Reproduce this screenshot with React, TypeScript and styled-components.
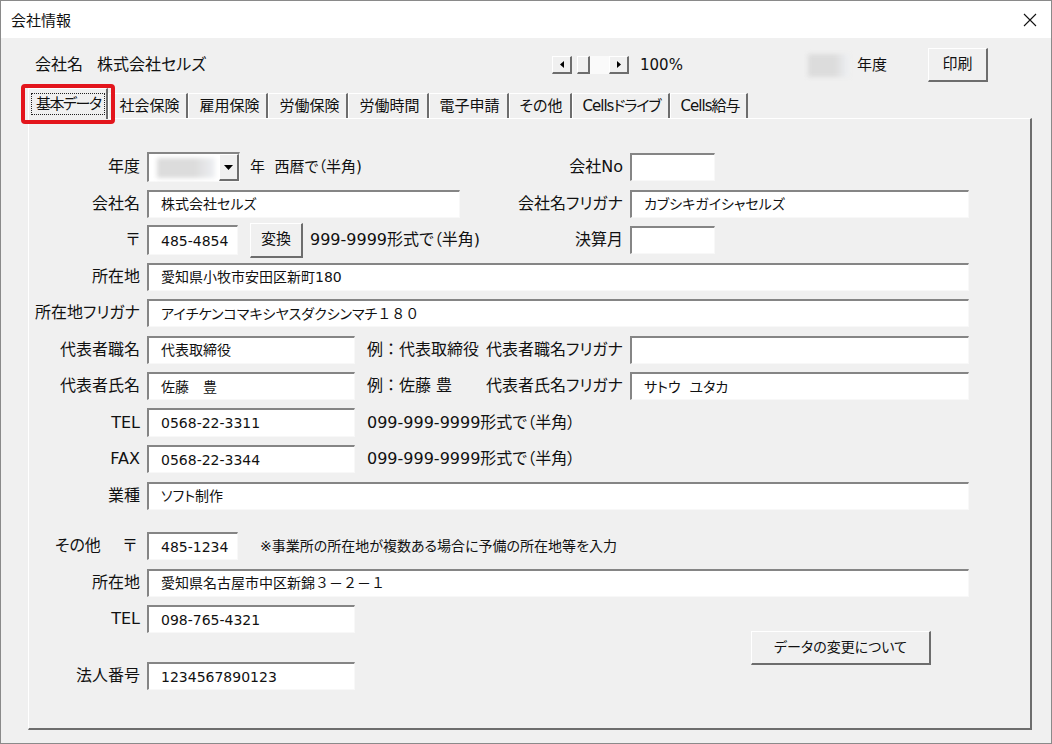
import React from "react";
import styled, { createGlobalStyle } from "styled-components";

const GlobalStyle = createGlobalStyle`
  html, body {
    margin: 0;
    padding: 0;
    background: #ffffff;
  }
  body {
    font-family: "DejaVu Sans", "Noto Sans CJK JP", sans-serif;
    font-feature-settings: "palt";
    color: #111111;
  }
`;

const Window = styled.div`
  width: 1052px;
  height: 744px;
  box-sizing: border-box;
  border: 1px solid #8a8a8a;
  display: flex;
  flex-direction: column;
  background: #f0f0f0;
`;

const TitleBar = styled.div`
  height: 37px;
  flex: none;
  background: #ffffff;
  display: flex;
  align-items: center;
  justify-content: space-between;
  padding: 0 14px 0 10px;
  font-size: 15px;
`;

const Body = styled.div`
  flex: 1;
  min-height: 0;
  display: flex;
  flex-direction: column;
  padding: 10px 19px 13px 27px;
`;

const Header = styled.div`
  height: 34px;
  flex: none;
  display: flex;
  align-items: center;
  padding: 0 44px 0 7px;
  font-size: 16px;
  line-height: 1;
`;

const NameGroup = styled.div`
  width: 517px;
  display: flex;
  gap: 14px;
`;

const ZoomGroup = styled.div`
  width: 256px;
  display: flex;
  align-items: center;
  gap: 11px;
  font-size: 15px;
`;

const ScrollBar = styled.div`
  display: flex;
  height: 18px;
`;

const Raised = styled.div`
  box-sizing: border-box;
  background: #f0f0f0;
  border-top: 1px solid #ffffff;
  border-left: 1px solid #ffffff;
  border-right: 2px solid #6d6d6d;
  border-bottom: 2px solid #6d6d6d;
  display: flex;
  align-items: center;
  justify-content: center;
`;

const ScrollArrow = styled(Raised)`
  width: 20px;
  height: 18px;
`;

const Track = styled.div`
  width: 37px;
  display: flex;
  background: linear-gradient(to right, #f0f0f0 0 5px, #fafafa 5px);
`;

const Thumb = styled(Raised)`
  margin-left: 5px;
  width: 13px;
  height: 18px;
`;

const BlurPatch = styled.div<{ $w: number; $h: number }>`
  width: ${(p) => p.$w}px;
  height: ${(p) => p.$h}px;
  background: linear-gradient(to right, #dcdcdc 65%, #eef0f3);
  filter: blur(2px);
`;

const YearCaption = styled.span`
  margin-left: 8px;
  font-size: 15px;
`;

const PushButton = styled(Raised)<{ $w: number; $h: number }>`
  width: ${(p) => p.$w}px;
  height: ${(p) => p.$h}px;
  font-size: 15px;
  line-height: 1;
`;

const PrintButton = styled(PushButton)`
  margin-left: auto;
`;

const TabStrip = styled.div`
  height: 30px;
  flex: none;
  margin-top: 6px;
  display: flex;
  align-items: flex-end;
  font-size: 15px;
  line-height: 1;
  position: relative;
  z-index: 1;
`;

const Tab = styled.div<{ $tight?: boolean }>`
  height: 25px;
  box-sizing: border-box;
  border-top: 1px solid #ffffff;
  border-left: 1px solid #ffffff;
  border-right: 2px solid #6d6d6d;
  padding: 0 7px 0 10px;
  display: flex;
  align-items: center;
  white-space: nowrap;
  letter-spacing: ${(p) => (p.$tight ? "-1px" : "0")};
`;

const ActiveTab = styled.div`
  position: relative;
  height: 31px;
  margin-bottom: -1px;
  box-sizing: border-box;
  background: #f0f0f0;
  border-top: 1px solid #ffffff;
  border-left: 1px solid #ffffff;
  border-right: 2px solid #6d6d6d;
  padding: 4px 1px 4px 2px;
  display: flex;
`;

const FocusRect = styled.div`
  border: 1px dotted #222222;
  padding: 0 4px;
  display: flex;
  align-items: center;
  white-space: nowrap;
  letter-spacing: -1.5px;
`;

const Highlight = styled.div`
  position: absolute;
  left: -8px;
  right: -9px;
  top: -5px;
  bottom: -5px;
  border: 4px solid #e3151c;
  border-radius: 4px;
  pointer-events: none;
`;

const Panel = styled.div`
  flex: 1;
  min-height: 0;
  box-sizing: border-box;
  border-top: 1px solid #ffffff;
  border-left: 1px solid #ffffff;
  border-right: 2px solid #6d6d6d;
  border-bottom: 2px solid #6d6d6d;
  padding-top: 30px;
`;

const Row = styled.div<{ $gap?: number }>`
  display: grid;
  grid-template-columns: 118px 334px 149px 339px;
  height: 36.5px;
  align-items: center;
  margin-top: ${(p) => p.$gap ?? 0}px;
`;

const Label = styled.div<{ $split?: boolean }>`
  padding: ${(p) => (p.$split ? "0 10px 0 26px" : "0 7px 0 0")};
  display: flex;
  justify-content: ${(p) => (p.$split ? "space-between" : "flex-end")};
  font-size: 16px;
  line-height: 1;
  white-space: nowrap;
`;

const Cell = styled.div<{ $span?: number }>`
  grid-column: span ${(p) => p.$span ?? 1};
  display: flex;
  align-items: center;
  white-space: nowrap;
`;

const TextBox = styled.div<{ $w: number; $h?: number }>`
  width: ${(p) => p.$w}px;
  height: ${(p) => p.$h ?? 28}px;
  box-sizing: border-box;
  flex: none;
  background: #ffffff;
  border-style: solid;
  border-width: 2px 1px 1px 2px;
  border-color: #858585 #f8f8f8 #f8f8f8 #858585;
  padding-left: 12px;
  display: flex;
  align-items: center;
  font-size: 14px;
  line-height: 1;
  white-space: pre;
`;

/* full-width digits keep their em width */
const Wide = styled.span`
  font-feature-settings: normal;
`;

const Combo = styled.div`
  width: 93px;
  height: 30px;
  box-sizing: border-box;
  display: flex;
  background: #ffffff;
  border-style: solid;
  border-width: 2px 1px 1px 2px;
  border-color: #858585 #f8f8f8 #f8f8f8 #858585;
`;

const ComboField = styled.div`
  flex: 1;
  display: flex;
  align-items: center;
  padding-left: 8px;
`;

const DropButton = styled(Raised)`
  width: 20px;
  height: 100%;
`;

const Hint = styled.span<{ $ml: number; $size?: number; $full?: boolean }>`
  margin-left: ${(p) => p.$ml}px;
  font-size: ${(p) => p.$size ?? 16}px;
  line-height: 1;
  font-feature-settings: ${(p) => (p.$full ? "normal" : "\"palt\"")};
`;

const Tail = styled.div`
  display: flex;
  align-items: center;
`;

const Stack = styled.div`
  width: 452px;
  display: flex;
  flex-direction: column;
`;

const AboutButton = styled(PushButton)`
  margin-left: 270px;
  font-size: 14px;
`;

const tabs = [
  "社会保険",
  "雇用保険",
  "労働保険",
  "労働時間",
  "電子申請",
  "その他",
  "Cellsドライブ",
  "Cells給与",
];

function CloseIcon() {
  return (
    <svg width="14" height="14" viewBox="0 0 14 14">
      <path d="M1 1 L13 13 M13 1 L1 13" stroke="#111" strokeWidth="1.1" fill="none" />
    </svg>
  );
}

function Arrow({ dir }: { dir: "left" | "right" | "down" }) {
  if (dir === "down") {
    return (
      <svg width="9" height="5" viewBox="0 0 9 5">
        <polygon points="0,0 9,0 4.5,5" fill="#000" />
      </svg>
    );
  }
  return (
    <svg width="4" height="7" viewBox="0 0 4 7">
      <polygon points={dir === "left" ? "4,0 4,7 0,3.5" : "0,0 0,7 4,3.5"} fill="#000" />
    </svg>
  );
}

export default function App() {
  return (
    <>
      <GlobalStyle />
      <Window>
        <TitleBar>
          <span>会社情報</span>
          <CloseIcon />
        </TitleBar>
        <Body>
          <Header>
            <NameGroup>
              <span>会社名</span>
              <span>株式会社セルズ</span>
            </NameGroup>
            <ZoomGroup>
              <ScrollBar>
                <ScrollArrow>
                  <Arrow dir="left" />
                </ScrollArrow>
                <Track>
                  <Thumb />
                </Track>
                <ScrollArrow>
                  <Arrow dir="right" />
                </ScrollArrow>
              </ScrollBar>
              <span>100%</span>
            </ZoomGroup>
            <BlurPatch $w={41} $h={23} />
            <YearCaption>年度</YearCaption>
            <PrintButton $w={60} $h={34}>
              印刷
            </PrintButton>
          </Header>

          <TabStrip>
            <ActiveTab>
              <FocusRect>基本データ</FocusRect>
              <Highlight />
            </ActiveTab>
            {tabs.map((t) => (
              <Tab key={t} $tight={t.startsWith("Cells")}>
                {t}
              </Tab>
            ))}
          </TabStrip>

          <Panel>
            <Row>
              <Label>年度</Label>
              <Cell>
                <Combo>
                  <ComboField>
                    <BlurPatch $w={58} $h={20} />
                  </ComboField>
                  <DropButton>
                    <Arrow dir="down" />
                  </DropButton>
                </Combo>
                <Hint $ml={10} $size={15}>
                  年&nbsp;&nbsp;西暦で（半角)
                </Hint>
              </Cell>
              <Label>会社No</Label>
              <Cell>
                <TextBox $w={85} />
              </Cell>
            </Row>

            <Row>
              <Label>会社名</Label>
              <Cell>
                <TextBox $w={313}>株式会社セルズ</TextBox>
              </Cell>
              <Label>会社名フリガナ</Label>
              <Cell>
                <TextBox $w={339}>カブシキガイシャセルズ</TextBox>
              </Cell>
            </Row>

            <Row>
              <Label>〒</Label>
              <Cell>
                <TextBox $w={91} $h={30}>
                  485-4854
                </TextBox>
                <PushButton $w={53} $h={35} style={{ marginLeft: 12 }}>
                  変換
                </PushButton>
                <Hint $ml={7}>999-9999形式で（半角)</Hint>
              </Cell>
              <Label>決算月</Label>
              <Cell>
                <TextBox $w={85} />
              </Cell>
            </Row>

            <Row>
              <Label>所在地</Label>
              <Cell $span={3}>
                <TextBox $w={822}>愛知県小牧市安田区新町180</TextBox>
              </Cell>
            </Row>

            <Row>
              <Label>所在地フリガナ</Label>
              <Cell $span={3}>
                <TextBox $w={822}>
                  アイチケンコマキシヤスダクシンマチ<Wide>１８０</Wide>
                </TextBox>
              </Cell>
            </Row>

            <Row>
              <Label>代表者職名</Label>
              <Cell>
                <TextBox $w={208}>代表取締役</TextBox>
                <Hint $ml={12} $full>
                  例：代表取締役
                </Hint>
              </Cell>
              <Label>代表者職名フリガナ</Label>
              <Cell>
                <TextBox $w={339} />
              </Cell>
            </Row>

            <Row>
              <Label>代表者氏名</Label>
              <Cell>
                <TextBox $w={208}>佐藤　豊</TextBox>
                <Hint $ml={12} $full>
                  例：佐藤 豊
                </Hint>
              </Cell>
              <Label>代表者氏名フリガナ</Label>
              <Cell>
                <TextBox $w={339}>サトウ  ユタカ</TextBox>
              </Cell>
            </Row>

            <Row>
              <Label>TEL</Label>
              <Cell $span={3}>
                <TextBox $w={208} $h={29}>
                  0568-22-3311
                </TextBox>
                <Hint $ml={12}>099-999-9999形式で（半角）</Hint>
              </Cell>
            </Row>

            <Row>
              <Label>FAX</Label>
              <Cell $span={3}>
                <TextBox $w={208}>0568-22-3344</TextBox>
                <Hint $ml={12}>099-999-9999形式で（半角）</Hint>
              </Cell>
            </Row>

            <Row>
              <Label>業種</Label>
              <Cell $span={3}>
                <TextBox $w={822}>ソフト制作</TextBox>
              </Cell>
            </Row>

            <Row $gap={14}>
              <Label $split>
                <span>その他</span>
                <span>〒</span>
              </Label>
              <Cell $span={3}>
                <TextBox $w={91}>485-1234</TextBox>
                <Hint $ml={22} $size={14}>
                  ※事業所の所在地が複数ある場合に予備の所在地等を入力
                </Hint>
              </Cell>
            </Row>

            <Row>
              <Label>所在地</Label>
              <Cell $span={3}>
                <TextBox $w={822}>
                  愛知県名古屋市中区新錦<Wide>３－２－１</Wide>
                </TextBox>
              </Cell>
            </Row>

            <Tail>
              <Stack>
                <Row>
                  <Label>TEL</Label>
                  <Cell>
                    <TextBox $w={208}>098-765-4321</TextBox>
                  </Cell>
                </Row>
                <Row $gap={20.5}>
                  <Label>法人番号</Label>
                  <Cell>
                    <TextBox $w={208}>1234567890123</TextBox>
                  </Cell>
                </Row>
              </Stack>
              <AboutButton $w={180} $h={34}>
                データの変更について
              </AboutButton>
            </Tail>
          </Panel>
        </Body>
      </Window>
    </>
  );
}
